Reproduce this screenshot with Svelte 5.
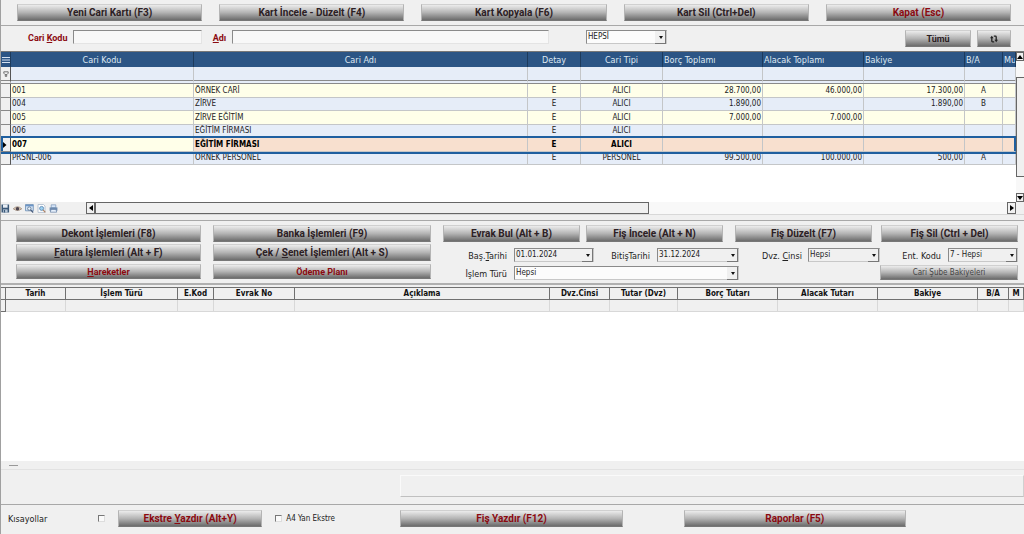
<script>
  const accounts = [
    { code: "001", name: "ÖRNEK CARİ", detail: "E", type: "ALICI", debit: "28.700,00", credit: "46.000,00", balance: "17.300,00", side: "A" },
    { code: "004", name: "ZİRVE", detail: "E", type: "ALICI", debit: "1.890,00", credit: "", balance: "1.890,00", side: "B" },
    { code: "005", name: "ZİRVE EĞİTİM", detail: "E", type: "ALICI", debit: "7.000,00", credit: "7.000,00", balance: "", side: "" },
    { code: "006", name: "EĞİTİM FİRMASI", detail: "E", type: "ALICI", debit: "", credit: "", balance: "", side: "" },
    { code: "007", name: "EĞİTİM FİRMASI", detail: "E", type: "ALICI", debit: "", credit: "", balance: "", side: "" },
    { code: "PRSNL-006", name: "ÖRNEK PERSONEL", detail: "E", type: "PERSONEL", debit: "99.500,00", credit: "100.000,00", balance: "500,00", side: "A" },
  ];

  const moveColumns = [
    "Tarih", "İşlem Türü", "E.Kod", "Evrak No", "Açıklama", "Dvz.Cinsi",
    "Tutar (Dvz)", "Borç Tutarı", "Alacak Tutarı", "Bakiye", "B/A", "M",
  ];

  let selected = $state("007");
  let code = $state("");
  let name = $state("");
</script>

<div class="window">
  <nav class="toolbar">
    <button>Yeni Cari Kartı (F3)</button>
    <button>Kart İncele - Düzelt (F4)</button>
    <button>Kart Kopyala (F6)</button>
    <button>Kart Sil (Ctrl+Del)</button>
    <button class="red">Kapat (Esc)</button>
  </nav>

  <form class="search" onsubmit={(e) => e.preventDefault()}>
    <label class="first" for="code">Cari <u>K</u>odu</label>
    <input class="code" id="code" type="text" bind:value={code} />
    <label class="second" for="name"><u>A</u>dı</label>
    <input class="name" id="name" type="text" bind:value={name} />
    <span class="combo kind">
      <select aria-label="Cari tipi"><option>HEPSİ</option></select>
    </span>
    <span class="fill"></span>
    <button class="all" type="button">Tümü</button>
    <button class="refresh" type="button" aria-label="Yenile">
      <svg viewBox="0 0 8 8" width="8" height="8" fill="none" stroke="#222" stroke-width="1.3">
        <path d="M4.2 6.8H2.6Q1.8 6.8 1.8 6V3M3.8 1.2h1.6q.8 0 .8.8v3" />
        <path d="M0 3.2 1.8.8l1.8 2.4zM4.4 4.8l1.8 2.4L8 4.8z" fill="#222" stroke="none" />
      </svg>
    </button>
  </form>

  <!-- account list -->
  <section class="accounts">
    <div class="list">
      <table>
        <colgroup>
          <col class="w-mark" /><col class="w-code" /><col />
          <col class="w-detail" /><col class="w-type" /><col class="w-debit" />
          <col class="w-money" /><col class="w-money" /><col class="w-side" /><col class="w-last" />
        </colgroup>
        <thead>
          <tr>
            <th class="menu">
              <svg viewBox="0 0 8 8" width="8" height="8" stroke="#d5e2f2"><path d="M0 1.5h8M0 4h8M0 6.5h8" /></svg>
            </th>
            <th>Cari Kodu</th>
            <th>Cari Adı</th>
            <th>Detay</th>
            <th>Cari Tipi</th>
            <th class="left">Borç Toplamı</th>
            <th class="left">Alacak Toplamı</th>
            <th class="left">Bakiye</th>
            <th class="left">B/A</th>
            <th class="left">Mu</th>
          </tr>
          <tr class="filter">
            <td class="mark">
              <svg viewBox="0 0 6 6" width="6" height="6" fill="none" stroke="#555" stroke-width=".8">
                <path d="M.8.8h4.4v1.4L3.8 3.6H2.2L.8 2.2zM2.3 3.6v1.8h1.4V3.6" />
              </svg>
            </td>
            {#each Array(9) as _}<td></td>{/each}
          </tr>
        </thead>
        <tbody>
          {#each accounts as row}
            <tr class:selected={row.code === selected} onclick={() => (selected = row.code)}>
              <td class="mark">
                {#if row.code === selected}
                  <svg viewBox="0 0 4 6" width="4" height="6"><path d="M0 0 3.5 3 0 6z" /></svg>
                {/if}
              </td>
              <td class="key">{row.code}</td>
              <td>{row.name}</td>
              <td class="mid">{row.detail}</td>
              <td class="mid">{row.type}</td>
              <td class="num">{row.debit}</td>
              <td class="num">{row.credit}</td>
              <td class="num">{row.balance}</td>
              <td class="mid">{row.side}</td>
              <td></td>
            </tr>
          {/each}
        </tbody>
      </table>
    </div>
    <div class="vscroll">
      <button aria-label="Yukarı"><svg viewBox="0 0 6 4" width="6" height="4"><path d="M3 0 6 4H0z" /></svg></button>
      <span class="thumb"></span>
      <button aria-label="Aşağı"><svg viewBox="0 0 6 4" width="6" height="4"><path d="M3 4 6 0H0z" /></svg></button>
    </div>
  </section>

  <div class="strip">
    <div class="tools">
      <svg viewBox="0 0 9 9" width="9" height="9">
        <path d="M.5.5h7.6v8H.5z" fill="#3b5878" />
        <path d="M2 .5h4.6v3.2H2z" fill="#e8eef5" />
        <path d="M2 5.4h4.6v3.1H2z" fill="#b9c8d8" />
        <path d="M2.8 6h1.3v2.5H2.8z" fill="#3b5878" />
      </svg>
      <svg viewBox="0 0 9 9" width="9" height="9">
        <path d="M.3 4.8Q4.5.8 8.7 4.8 4.5 8 .3 4.8z" fill="#e7d6c6" stroke="#97816e" stroke-width=".8" />
        <circle cx="4.5" cy="4.7" r="1.8" fill="#4d4550" />
      </svg>
      <svg viewBox="0 0 9 9" width="9" height="9">
        <path d="M.5.5h7.8v6.3H.5z" fill="#cfe0f2" stroke="#6b8db4" stroke-width=".8" />
        <path d="M.5 1h7.8v1.3H.5z" fill="#6b95c7" />
        <circle cx="4.3" cy="4.6" r="1.7" fill="#e9f3fc" stroke="#5c718b" stroke-width=".8" />
        <path d="m5.6 5.9 2.6 2.6" stroke="#46597a" stroke-width="1.2" />
      </svg>
      <svg viewBox="0 0 9 9" width="9" height="9">
        <path d="M1 .5h5.5L8 2v6.4H1z" fill="#fff" stroke="#a8b8ca" stroke-width=".8" />
        <circle cx="4.6" cy="4.4" r="2" fill="#9ed0f0" stroke="#5683ad" stroke-width=".8" />
        <path d="m6 5.9 2.4 2.5" stroke="#b08060" stroke-width="1.2" />
      </svg>
      <svg viewBox="0 0 9 9" width="9" height="9">
        <path d="M2.2.8h4.6v3H2.2z" fill="#d6e6fa" stroke="#7994b4" stroke-width=".7" />
        <path d="M.6 3.4h7.8v3.4H.6z" fill="#6f8cb0" />
        <path d="M2 5.4h5l.7 2.8H1.3z" fill="#e6f0fc" stroke="#6580a4" stroke-width=".7" />
      </svg>
    </div>
    <div class="hscroll">
      <button aria-label="Sola"><svg viewBox="0 0 4 6" width="4" height="6"><path d="M4 0v6L0 3z" /></svg></button>
      <span class="thumb"></span>
      <span class="track"></span>
      <button aria-label="Sağa"><svg viewBox="0 0 4 6" width="4" height="6"><path d="M0 0v6l4-3z" /></svg></button>
    </div>
  </div>

  <!-- actions on the chosen account -->
  <section class="actions">
    <div class="menus">
      <button>Dekont İşlemleri (F8)</button>
      <button>Banka İşlemleri (F9)</button>
      <button><u>F</u>atura İşlemleri (Alt + F)</button>
      <button>Çek / <u>S</u>enet İşlemleri (Alt + S)</button>
      <button class="red small"><u>H</u>areketler</button>
      <button class="red small">Ödeme Planı</button>
    </div>
    <div class="right">
      <div class="docs">
        <div class="pair find">
          <button>Evrak Bul (Alt + B)</button>
          <button>Fiş İncele (Alt + N)</button>
        </div>
        <div class="pair edit">
          <button>Fiş Düzelt (F7)</button>
          <button>Fiş Sil (Ctrl + Del)</button>
        </div>
      </div>
      <div class="fields">
        <div class="dates">
          <label for="from">Baş.<u>T</u>arihi</label>
          <span class="combo"><select id="from"><option>01.01.2024</option></select></span>
          <label for="to">BitişTarihi</label>
          <span class="combo"><select id="to"><option>31.12.2024</option></select></span>
          <label for="kind">İşlem Türü</label>
          <span class="combo white wide"><select id="kind"><option>Hepsi</option></select></span>
        </div>
        <div class="codes">
          <label for="currency">Dvz. <u>C</u>insi</label>
          <span class="combo"><select id="currency"><option>Hepsi</option></select></span>
          <label for="ent">Ent. Kodu</label>
          <span class="combo"><select id="ent"><option>7 - Hepsi</option></select></span>
          <button class="branch">Cari Şube Bakiyeleri</button>
        </div>
      </div>
    </div>
  </section>

  <section class="moves">
    <table>
      <colgroup>
        <col class="m-mark" /><col class="m-date" /><col class="m-kind" /><col class="m-ekod" />
        <col class="m-doc" /><col /><col class="m-cur" /><col class="m-amount" /><col class="m-money" />
        <col class="m-money" /><col class="m-money" /><col class="m-side" /><col class="m-last" />
      </colgroup>
      <thead>
        <tr>
          <th></th>
          {#each moveColumns as title}<th>{title}</th>{/each}
        </tr>
      </thead>
      <tbody>
        <tr>{#each Array(13) as _}<td></td>{/each}</tr>
      </tbody>
    </table>
  </section>

  <div class="splitter"><span></span></div>
  <div class="summary"><div class="box"></div></div>

  <footer>
    <label class="short" for="shortcuts">Kısayollar</label>
    <input id="shortcuts" type="checkbox" />
    <button class="red print">Ekstre <u>Y</u>azdır (Alt+Y)</button>
    <label class="a4"><input type="checkbox" />A4 Yan Ekstre</label>
    <button class="red slip">Fiş Yazdır (F12)</button>
    <button class="red reports">Raporlar (F5)</button>
  </footer>
</div>

<style>
  :global(body) {
    margin: 0;
    background: #f0f0f0;
  }

  .window {
    --ui: "DejaVu Sans Condensed", "DejaVu Sans", sans-serif;
    --bold: Roboto, "Open Sans", sans-serif;
    box-sizing: border-box;
    min-height: 100vh;
    display: flex;
    flex-direction: column;
    border-left: 1px solid #a0a0a0;
    background: #f0f0f0;
    color: #222;
    font: 9px/12px var(--ui);
  }

  .window :global(*) {
    box-sizing: border-box;
  }

  button {
    height: 17px;
    padding: 0;
    border: 1px solid #b4b4b4;
    border-top-color: #d0d0d0;
    border-bottom-color: #777;
    border-radius: 0;
    background: linear-gradient(#ececec, #b4b4b4 50%, #6c6c6c);
    color: #2c2024;
    font: bold 10px/14px var(--bold);
    white-space: nowrap;
  }

  .red {
    color: #8b0a10;
  }

  svg {
    display: block;
  }

  /* top bars */
  .toolbar {
    display: flex;
    gap: 17px;
    padding: 4px 13px 4px 16px;
    border-bottom: 1px solid #a8a8a8;
  }

  .toolbar button {
    flex: 1;
  }

  .search {
    display: flex;
    align-items: flex-start;
    height: 25px;
    padding: 4px 13px 0 27px;
  }

  .search label {
    color: #8b0a10;
    font: bold 9px/16px var(--bold);
    white-space: nowrap;
  }

  .first {
    width: 45px;
  }

  .second {
    width: 30px;
    padding-left: 11px;
  }

  input[type="text"] {
    min-width: 0;
    height: 14px;
    padding: 0 2px;
    border: 1px solid #e4e4e4;
    border-top-color: #8a8a8a;
    border-left-color: #8a8a8a;
    border-radius: 0;
    background: #f8f8f8;
    font: 9px/12px var(--ui);
  }

  .code {
    flex: 125 1 0;
  }

  .name {
    flex: 317 1 0;
  }

  .kind {
    flex: 81 1 0;
    margin-left: 37px;
  }

  .fill {
    flex: 242 1 0;
  }

  .all {
    width: 66px;
    margin-right: 6px;
    font-size: 9px;
  }

  .refresh {
    display: grid;
    place-items: center;
    width: 34px;
  }

  .combo {
    display: flex;
    height: 14px;
    border: 1px solid #c8c8c8;
    border-top-color: #8a8a8a;
    border-left-color: #8a8a8a;
    background: #f0f0f0;
    position: relative;
  }

  .combo::after {
    content: "";
    position: absolute;
    right: 3px;
    top: 5px;
    border: 2px solid transparent;
    border-top: 3px solid #111;
    border-bottom: 0;
    pointer-events: none;
  }

  .combo::before {
    content: "";
    position: absolute;
    top: 0;
    right: 0;
    width: 10px;
    height: 12px;
    border-right: 1px solid #777;
    border-bottom: 1px solid #777;
    background: #f0f0f0;
    pointer-events: none;
  }

  .white,
  .kind {
    background: #fcfcfc;
  }

  select {
    width: 100%;
    padding: 0 10px 0 1px;
    border: 0;
    background: none;
    appearance: none;
    color: #222;
    font: 8px/12px var(--ui);
  }

  /* account list */
  .accounts {
    display: flex;
    height: 151px;
    border-top: 1px solid #777;
    background: #fff;
  }

  .list {
    flex: 1;
    min-width: 0;
    overflow: hidden;
  }

  table {
    width: 100%;
    table-layout: fixed;
    border-collapse: separate;
    border-spacing: 0;
  }

  th,
  td {
    padding: 0 1px;
    overflow: hidden;
    white-space: nowrap;
    text-align: left;
  }

  .w-mark { width: 10px; }
  .w-code { width: 183px; }
  .w-detail { width: 53px; }
  .w-type { width: 82px; }
  .w-debit { width: 100px; }
  .w-money { width: 101px; }
  .w-side { width: 38px; }
  .w-last { width: 13px; }

  .accounts th {
    height: 15px;
    border-right: 1px solid #1c3a5c;
    background: #2c5585;
    color: #dfe8f3;
    font: 9px/14px var(--ui);
    text-align: center;
  }

  .accounts th.left {
    text-align: left;
  }

  .accounts td {
    height: 13px;
    border-right: 1px solid #c4c6c8;
    border-bottom: 1px solid #c4c6c8;
    background: #e6edf8;
    font-size: 8px;
    line-height: 12px;
  }

  .accounts tbody tr:nth-child(odd) td {
    height: 14px;
    background: #ffffe9;
  }

  .accounts .filter td {
    height: 17px;
    border-bottom: 4px double #8a8a8a;
  }

  .accounts tr td.mark,
  .accounts tbody tr:nth-child(odd) td.mark {
    padding-left: 2px;
    border-right-color: #555;
    border-bottom-color: #888;
    background: #f0f0f0;
  }

  /* the list clips the outline's ends, so the outer cells draw them */
  .accounts tbody tr.selected {
    outline: 2px solid #1f5f9f;
  }

  .accounts tbody tr.selected td:first-child {
    box-shadow: inset 2px 0 #1f5f9f;
  }

  .accounts tbody tr.selected td:last-child {
    border-right-color: #1f5f9f;
    box-shadow: inset -1px 0 #1f5f9f;
  }

  .accounts tbody tr.selected td {
    background: #f8e0cf;
    color: #000;
    font-weight: bold;
  }

  .accounts tbody tr.selected td.key {
    background: #ffffe9;
  }

  .accounts td.mid {
    text-align: center;
  }

  .accounts td.num {
    text-align: right;
  }

  /* scroll bars */
  .vscroll {
    display: flex;
    flex-direction: column;
    width: 8px;
    background: #f8f8f8;
  }

  .vscroll button,
  .hscroll button {
    display: grid;
    place-items: center;
    border: 1px solid #666;
    background: #f0f0f0;
  }

  .vscroll button {
    width: 8px;
    height: 9px;
  }

  .thumb {
    border: 1px solid #666;
    background: #f0f0f0;
  }

  .vscroll .thumb {
    flex: 1;
    margin: 16px 0;
    border-right: 0;
  }

  .strip {
    display: flex;
    height: 13px;
    padding-right: 8px;
    border-bottom: 1px solid #d8d8d8;
  }

  .tools {
    display: flex;
    align-items: center;
    gap: 3px;
    width: 85px;
  }

  .hscroll {
    flex: 1;
    display: flex;
    background: #f8f8f8;
  }

  .hscroll button {
    width: 9px;
    height: 12px;
  }

  .hscroll .thumb {
    flex: 553 1 0;
  }

  .track {
    flex: 359 1 0;
  }

  /* actions */
  .actions {
    display: flex;
    gap: 12px;
    margin-top: 5px;
    padding: 4px 6px 3px 15px;
    border-top: 1px solid #a8a8a8;
    border-bottom: 2px solid #b0b0b0;
  }

  .menus {
    flex: 415 1 0;
    display: grid;
    grid-template-columns: 185fr 218fr;
    grid-template-rows: 17px 17px 15px;
    align-content: start;
    gap: 2px 12px;
  }

  .actions .small {
    height: 15px;
    margin-top: 1px;
    font-size: 9px;
    line-height: 12px;
  }

  .right {
    flex: 575 1 0;
  }

  .docs {
    display: flex;
    gap: 12px;
  }

  .pair {
    display: flex;
  }

  .find {
    flex: 280 1 0;
    gap: 6px;
  }

  .edit {
    flex: 283 1 0;
    gap: 9px;
  }

  .pair button {
    flex: 1;
  }

  .fields {
    display: flex;
    gap: 23px;
    margin-top: 6px;
  }

  .dates,
  .codes {
    display: grid;
    row-gap: 3px;
  }

  .dates {
    flex: 296 1 0;
    grid-template-columns: 71px 80fr 63px 82fr;
  }

  .codes {
    flex: 256 1 0;
    grid-template-columns: 46px 72fr 68px 70fr;
  }

  .fields label {
    padding-right: 7px;
    font: 9px/16px var(--ui);
    height: 14px;
    text-align: right;
    white-space: nowrap;
  }

  .wide {
    grid-column: 2 / 5;
  }

  .actions .branch {
    grid-column: 3 / 5;
    height: 15px;
    font: 8px/12px var(--ui);
    color: #444;
  }

  /* movements */
  .moves {
    flex: 1;
    padding-top: 2px;
    background: linear-gradient(#f0f0f0 2px, #fff 2px);
  }

  .m-mark { width: 5px; }
  .m-date { width: 60px; }
  .m-kind { width: 112px; }
  .m-ekod { width: 36px; }
  .m-doc { width: 81px; }
  .m-cur { width: 60px; }
  .m-amount { width: 68px; }
  .m-money { width: 100px; }
  .m-side { width: 31px; }
  .m-last { width: 15px; }

  .moves th {
    height: 13px;
    border: solid #707070;
    border-width: 1px 1px 1px 0;
    background: #f0f0f0;
    color: #111;
    font: bold 8px/11px var(--ui);
    text-align: center;
  }

  .moves td {
    height: 12px;
    border-right: 1px solid #d8d8d8;
    border-bottom: 1px solid #d8d8d8;
    background: #f0f0f0;
  }

  .moves td:first-child {
    border-color: #707070;
  }

  /* bottom */
  .splitter {
    height: 9px;
    padding: 4px 8px;
    border-bottom: 1px solid #e2e2e2;
  }

  .splitter span {
    display: block;
    width: 9px;
    height: 1px;
    background: #999;
  }

  .summary {
    display: flex;
    justify-content: flex-end;
    height: 35px;
    padding-top: 5px;
    border-bottom: 1px solid #a8a8a8;
  }

  .box {
    width: 61%;
    height: 22px;
    border: 1px solid #fafafa;
    border-right-color: #d0d0d0;
    border-bottom-color: #c0c0c0;
  }

  footer {
    display: flex;
    align-items: center;
    height: 29px;
    padding: 0 0 2px 7px;
  }

  input[type="checkbox"] {
    flex: none;
    width: 7px;
    height: 7px;
    margin: 0;
    border: 1px solid #ddd;
    border-top-color: #777;
    border-left-color: #777;
    background: #fafafa;
    appearance: none;
  }

  .short {
    width: 90px;
  }

  .print {
    flex: 142 1 0;
    margin-left: 13px;
  }

  .a4 {
    display: flex;
    align-items: center;
    gap: 4px;
    flex: 125 1 0;
    padding-left: 13px;
    font-size: 8px;
  }

  .slip,
  .reports {
    flex: 220 1 0;
  }

  .reports {
    margin: 0 118px 0 61px;
  }
</style>
